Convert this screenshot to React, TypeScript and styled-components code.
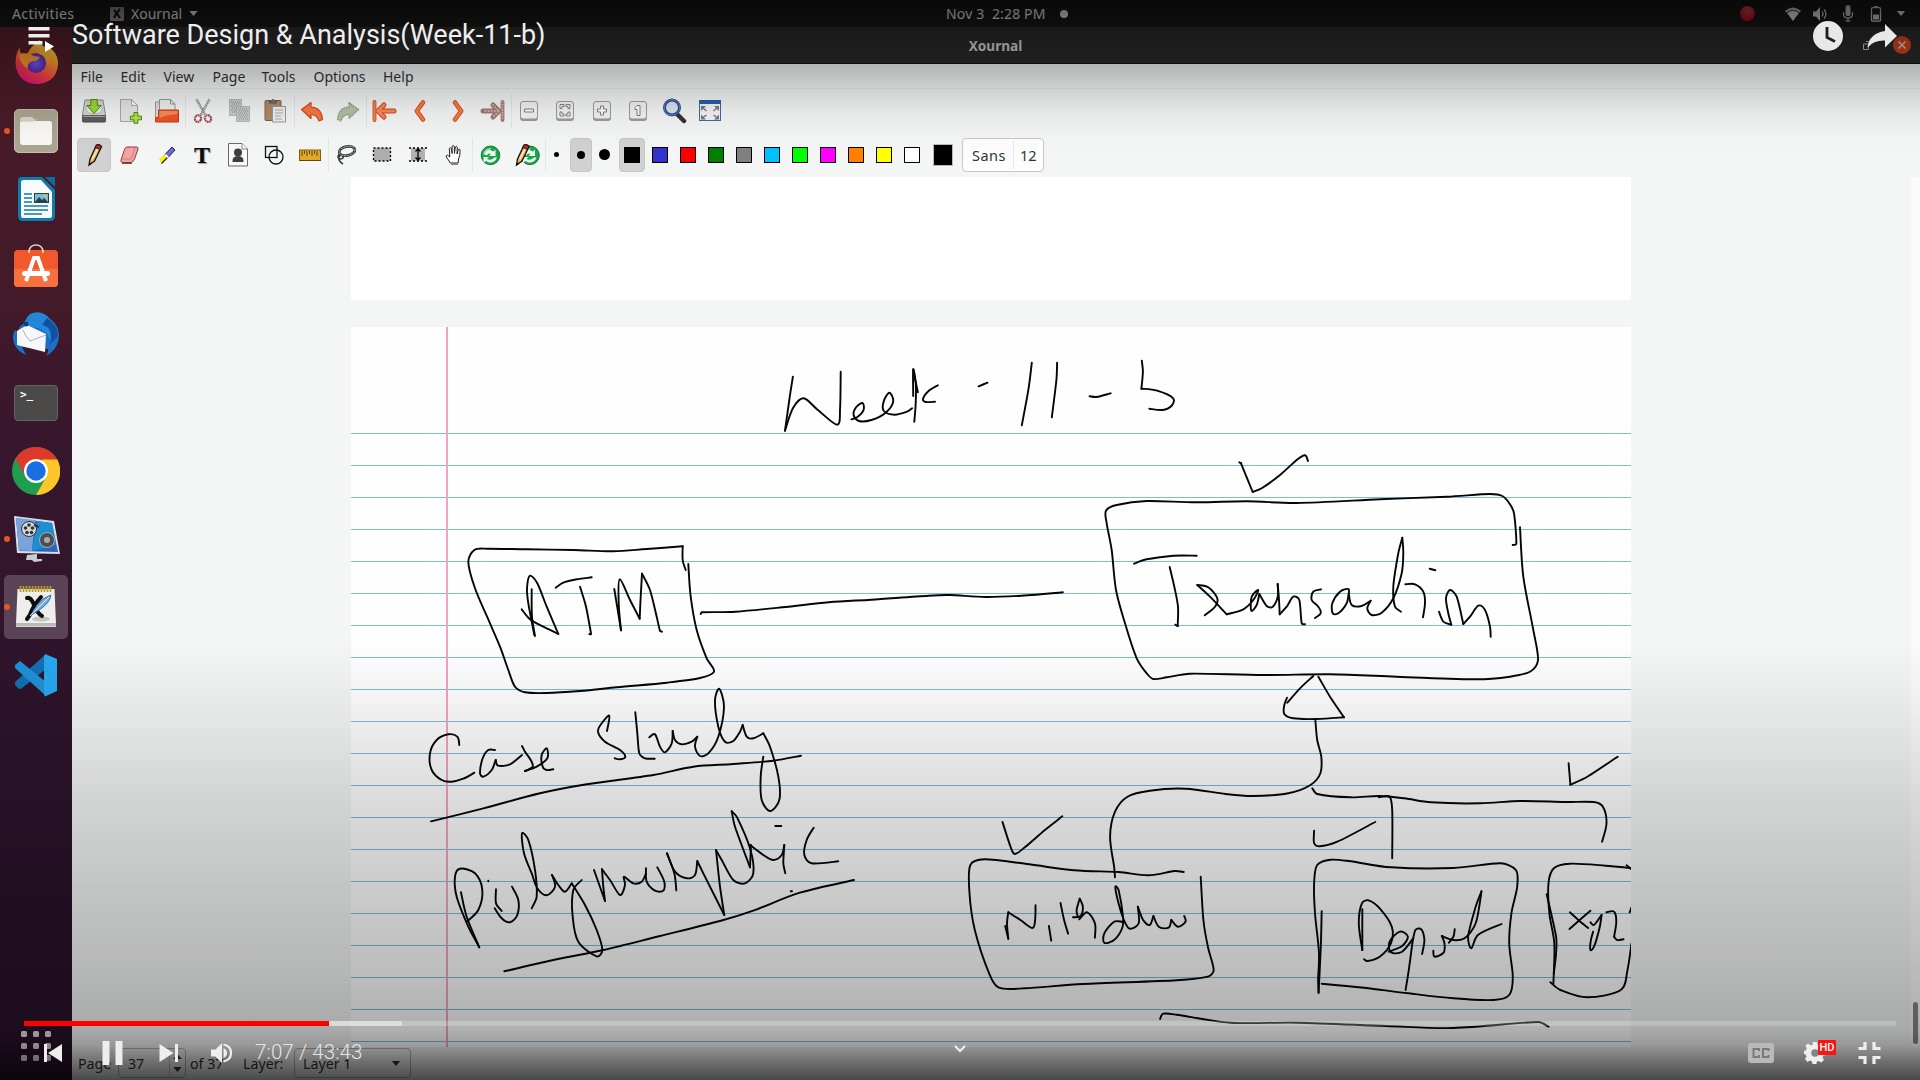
import React from 'react';
import styled, { createGlobalStyle } from 'styled-components';

const Global = createGlobalStyle`
  html, body { margin: 0; padding: 0; background: #000; }
  * { box-sizing: border-box; }
  svg { display: block; flex: none; }
`;

const UI_FONT = '"Noto Sans", "Open Sans", sans-serif';
const PLAYER_FONT = 'Roboto, "Liberation Sans", sans-serif';

/* ---------- desktop ---------- */

const Screen = styled.main`
  position: relative;
  width: 1920px;
  height: 1080px;
  overflow: hidden;
  display: grid;
  grid-template-rows: 27px 1fr;
  font-family: ${UI_FONT};
  font-size: 14px;
  color: #2e3436;
`;

const Panel = styled.header`
  background: #181817;
  color: #ededed;
  display: grid;
  grid-template-columns: 1fr 240px 1fr;
  align-items: center;
  font-size: 14px;
  line-height: 26px;
`;

const PanelLeft = styled.div`
  display: flex;
  align-items: center;
  padding-left: 12px;
  height: 26px;
`;

const Activities = styled.span`
  width: 98px;
  letter-spacing: 0.4px;
`;

const AppMenu = styled.div`
  display: flex;
  align-items: center;
  gap: 7px;
`;

const PanelClock = styled.div`
  display: flex;
  align-items: center;
  padding-left: 106px;
  white-space: pre;
  letter-spacing: 0.15px;
  gap: 14px;
  height: 26px;
`;

const Bullet = styled.span`
  width: 8px;
  height: 8px;
  border-radius: 50%;
  background: #ededed;
`;

const PanelRight = styled.div`
  display: flex;
  justify-content: flex-end;
  align-items: center;
  gap: 12px;
  height: 26px;
  padding-right: 14px;
`;

const Record = styled.span`
  width: 15px;
  height: 15px;
  margin-right: 18px;
  border-radius: 50%;
  background: radial-gradient(circle at 50% 20%, #cf4a4a, #c01028 70%);
`;

const Desktop = styled.div`
  display: grid;
  grid-template-columns: 72px 1fr;
  min-height: 0;
`;

const Dock = styled.nav`
  display: flex;
  flex-direction: column;
  padding: 2px 0 10px;
  background: linear-gradient(#571e2a 0, #471a28 100px, #421a29 280px, #38172d 400px, #2d132b 700px, #28112a 100%);
`;

const DockItem = styled.div<{ $running?: boolean; $active?: boolean }>`
  position: relative;
  height: 64px;
  margin: 2px 4px;
  border-radius: 5px;
  display: flex;
  align-items: center;
  justify-content: center;
  padding-bottom: 1px;
  background: ${(p) => (p.$active ? 'rgba(255,255,255,0.2)' : 'transparent')};
  &::before {
    content: '';
    display: ${(p) => (p.$running ? 'block' : 'none')};
    position: absolute;
    left: 0;
    top: 29px;
    width: 6px;
    height: 6px;
    border-radius: 50%;
    background: #e95420;
  }
`;

const AppGrid = styled.div`
  margin: auto auto 9px;
  display: grid;
  grid-template-columns: repeat(3, 6px);
  grid-auto-rows: 6px;
  gap: 6px;
  width: 30px;
`;

const AppGridDot = styled.i`
  border-radius: 1.5px;
  background: #e6e0e6;
`;

/* ---------- Xournal window ---------- */

const Window = styled.section`
  display: grid;
  grid-template-rows: 37px 25px 43px 45px 870px 33px;
  background: #f4f5f5;
  min-width: 0;
`;

const TitleBar = styled.div`
  display: grid;
  grid-template-columns: 1fr auto 1fr;
  align-items: center;
  background: #2b2b2b;
  border-bottom: 1px solid #161616;
  color: #dedede;
  font-weight: 700;
  font-size: 13.6px;
  padding-right: 9px;
`;

const WindowTitle = styled.span`
  margin-left: 8px;
`;

const WindowButtons = styled.div`
  display: flex;
  justify-content: flex-end;
  align-items: center;
  gap: 22px;
`;

const CloseButton = styled.span`
  width: 18px;
  height: 18px;
  border-radius: 50%;
  background: #e2481f;
  display: flex;
  align-items: center;
  justify-content: center;
`;

const MenuBar = styled.div`
  display: flex;
  align-items: center;
  padding-left: 8.5px;
  border-bottom: 1px solid #e9e9e8;
`;

const MenuItem = styled.span<{ $w: number }>`
  width: ${(p) => p.$w}px;
  line-height: 20px;
  padding-top: 1px;
`;

const Toolbar = styled.div`
  display: flex;
  align-items: center;
  padding-left: 4px;
`;

const Tool = styled.span<{ $w?: number; $sep?: boolean }>`
  width: ${(p) => p.$w ?? 36.25}px;
  height: 34px;
  display: flex;
  align-items: center;
  justify-content: center;
  box-shadow: ${(p) => (p.$sep ? '1px 0 0 #e6e8e8' : 'none')};
`;

const ToolFace = styled.span<{ $on?: boolean; $w: number }>`
  width: ${(p) => p.$w}px;
  height: 34px;
  border-radius: 4px;
  display: flex;
  flex: none;
  align-items: center;
  justify-content: center;
  background: ${(p) => (p.$on ? '#d2d1d1' : 'transparent')};
  border: 1px solid ${(p) => (p.$on ? '#c8c7c6' : 'transparent')};
`;

const Thickness = styled.i<{ $d: number }>`
  width: ${(p) => p.$d}px;
  height: ${(p) => p.$d}px;
  border-radius: 50%;
  background: #000;
`;

const Swatch = styled.i<{ $c: string }>`
  width: 16px;
  height: 16px;
  background: ${(p) => p.$c};
  border: 1.5px solid #000;
`;

const ColorButton = styled.i`
  width: 20px;
  height: 22px;
  margin: 0 9px 0 7px;
  background: #000;
  border: 1px solid #b9b9b9;
`;

const FontButton = styled.div`
  display: flex;
  align-items: center;
  height: 34px;
  width: 82px;
  background: #fdfdfd;
  border: 1px solid #c9c8c6;
  border-radius: 4px;
  font-size: 14.5px;
`;

const FontName = styled.span`
  width: 51px;
  padding-left: 9px;
  line-height: 28px;
  letter-spacing: 0.5px;
  border-right: 1px solid #e8e8e7;
`;

const FontSize = styled.span`
  padding-left: 6px;
`;

const Viewport = styled.div`
  display: grid;
  grid-template-columns: 279px 1280px 280px 9px;
  overflow: hidden;
`;

const Pages = styled.div`
  grid-column: 2;
  display: flex;
  flex-direction: column;
  gap: 27px;
  overflow: hidden;
`;

const BlankSheet = styled.div`
  height: 123px;
  flex: none;
  background: #fff;
`;

const RuledSheet = styled.div`
  height: 720px;
  flex: none;
  background:
    linear-gradient(90deg, transparent 95.2px, #f0a3c8 95.2px, #f0a3c8 96.8px, transparent 96.8px),
    repeating-linear-gradient(transparent 0, transparent 30.7px, #7cbcdc 31px, #7cbcdc 31.8px, transparent 32px) 0 75px no-repeat,
    #fefefe;
`;

const ScrollTrack = styled.div`
  grid-column: 4;
  background: #fbfbfb;
  display: flex;
  flex-direction: column;
  justify-content: flex-end;
  padding: 0 0 3px 2px;
`;

const ScrollThumb = styled.i`
  width: 5px;
  height: 42px;
  border-radius: 3px;
  background: #868686;
`;

const StatusBar = styled.div`
  display: flex;
  align-items: center;
  padding: 0 0 1px 6px;
  font-size: 14.2px;
  color: #2e3436;
`;

const Field = styled.div<{ $w: number; $pl: number }>`
  display: flex;
  align-items: center;
  justify-content: space-between;
  width: ${(p) => p.$w}px;
  height: 30px;
  padding-left: ${(p) => p.$pl}px;
  border: 1.5px solid #b5b3b0;
  border-radius: 4px;
`;

const Spinner = styled.span`
  display: grid;
  grid-template-rows: 13px 13px;
  place-items: center;
  width: 16px;
  border-left: 1px solid #c4c4c4;
`;

const StatusText = styled.span<{ $w: number; $pl?: number }>`
  width: ${(p) => p.$w}px;
  padding-left: ${(p) => p.$pl ?? 0}px;
`;

const ComboArrow = styled.span`
  margin-right: 9px;
`;

/* ---------- video player overlay ---------- */

const Shade = styled.div`
  position: absolute;
  inset: 0;
  background:
    linear-gradient(rgba(0,0,0,.62) 0, rgba(0,0,0,.42) 27px, rgba(0,0,0,.34) 45px, rgba(0,0,0,.27) 64px,
      rgba(0,0,0,.15) 89px, rgba(0,0,0,.06) 112px, rgba(0,0,0,.015) 135px, transparent 155px),
    linear-gradient(transparent 640px, rgba(0,0,0,.05) 705px, rgba(0,0,0,.14) 805px, rgba(0,0,0,.2) 890px,
      rgba(0,0,0,.255) 970px, rgba(0,0,0,.31) 1030px, rgba(0,0,0,.38) 1045px, rgba(0,0,0,.53) 1060px, rgba(0,0,0,.7) 1080px);
`;

const Player = styled.div`
  position: absolute;
  inset: 0;
  display: flex;
  flex-direction: column;
  justify-content: space-between;
  font-family: ${PLAYER_FONT};
  color: #eee;
`;

const PlayerTop = styled.div`
  display: flex;
  align-items: flex-start;
  padding: 17px 20px 0 28px;
`;

const QueueIcon = styled.svg`
  margin-top: 10px;
`;

const VideoTitle = styled.h1`
  flex: 1;
  margin: 0 0 0 16px;
  font-size: 27px;
  line-height: 36px;
  font-weight: 400;
  white-space: nowrap;
`;

const PlayerBottom = styled.div`
  height: 59px;
`;

const Progress = styled.div`
  height: 5px;
  margin: 0 24px;
  display: flex;
  background: rgba(255, 255, 255, 0.22);
`;

const Segment = styled.i<{ $w: number; $c: string }>`
  width: ${(p) => p.$w}px;
  background: ${(p) => p.$c};
`;

const Controls = styled.div`
  height: 54px;
  display: grid;
  grid-template-columns: 1fr auto 1fr;
  align-items: center;
`;

const ControlGroup = styled.div<{ $end?: boolean }>`
  display: flex;
  align-items: center;
  height: 54px;
  justify-content: ${(p) => (p.$end ? 'flex-end' : 'flex-start')};
  padding: ${(p) => (p.$end ? '0 39px 0 0' : '0 0 0 43px')};
`;

const Time = styled.span`
  margin: -2px 0 0 21px;
  font-size: 20.5px;
  font-weight: 300;
  letter-spacing: 0.1px;
  line-height: 24px;
  color: #e4e4e4;
`;

const CollapseIcon = styled.svg`
  margin-bottom: 8px;
`;

const CaptionBadge = styled.span`
  width: 26px;
  height: 20px;
  border-radius: 3px;
  background: #b9b9b9;
  display: flex;
  align-items: center;
  justify-content: center;
`;

const Settings = styled.span`
  position: relative;
  margin: 0 22px 0 30px;
  padding-right: 10px;
`;

const HdBadge = styled.span`
  position: absolute;
  left: 14px;
  top: -2px;
  width: 18px;
  height: 15px;
  background: #f11;
  border-radius: 1px;
  color: #fff;
  font-size: 11px;
  font-weight: 500;
  line-height: 15px;
  text-align: center;
`;

/* ---------- toolbar icons ---------- */

const Svg = ({ s = 26, children }: { s?: number; children: React.ReactNode }) => (
  <svg width={s} height={s} viewBox="0 0 26 26">{children}</svg>
);

const SaveIcon = () => (
  <Svg>
    <path d="M4 2h18l2.500 15v6q0 1-1 1h-21q-1 0-1-1v-6z" fill="#d4d4d2" stroke="#8a8a88" />
    <path d="M1.500 17.500h23V23q0 1-1 1h-21q-1 0-1-1z" fill="#5c5c5c" stroke="#444" strokeWidth=".6" />
    <path d="M2 18h22v1H2z" fill="#a5a5a5" />
    <ellipse cx="13" cy="11" rx="8" ry="5" fill="#ececec" stroke="#bbb" />
    <path d="M9.800 1.500h6.400v6h4L13 15.500 5.800 7.500h4z" fill="#9bd53a" stroke="#4e8a0a" />
  </Svg>
);
const NewIcon = () => (
  <Svg>
    <path d="M3.500 1.500h11l6 6v16h-17z" fill="#e4e4e4" stroke="#a8a8a8" />
    <path d="M14.500 1.500v6h6z" fill="#fafafa" stroke="#a8a8a8" />
    <path d="M17 14.500h3.800v3.600h3.700v3.700h-3.700v3.500H17v-3.500h-3.600v-3.700H17z" fill="#b4e04a" stroke="#4e8a0a" />
  </Svg>
);
const OpenIcon = () => (
  <Svg>
    <path d="M1.500 4h7l2 3v15h-9z" fill="#ddd" stroke="#999" />
    <path d="M5.500 1.500h11l4.500 4.500v12h-15.500z" fill="#f0f0f0" stroke="#999" />
    <path d="M16.500 1.500V6H21" fill="none" stroke="#999" />
    <path d="M4.500 12h20v12h-23v-4.500h3z" fill="#ee5427" stroke="#cf3b10" />
    <path d="M5.500 13h18v3q-12 1-18 4z" fill="#f58a5e" />
  </Svg>
);
const CutIcon = () => (
  <Svg>
    <path d="M6.500 1.500l8.500 15M19.500 1.500L11 16.500" stroke="#8d8d8d" strokeWidth="2.600" fill="none" strokeDasharray="1.300 .7" />
    <g fill="none" stroke="#a04a57" strokeWidth="2.200" strokeDasharray="1.600 .5">
      <ellipse cx="8" cy="20.500" rx="3" ry="3.500" transform="rotate(30 8 20.500)" />
      <ellipse cx="18" cy="20.500" rx="3" ry="3.500" transform="rotate(-30 18 20.500)" />
    </g>
  </Svg>
);
const CopyIcon = () => (
  <Svg>
    <g fill="#c9cbcb" stroke="#8d9090" strokeDasharray="1 1">
      <path d="M3.500 1.500h12v16h-12z" /><path d="M10.500 8.500h13v15h-13z" />
      <path d="M12 11h10M13 13h9M12 15h10M13 17h9M12 19h10M13 21h9M5 4h9M6 6h8M5 8h5M6 10h4M5 12h5M6 14h4" />
    </g>
  </Svg>
);
const PasteIcon = () => (
  <Svg>
    <rect x="3" y="2.500" width="16" height="20" rx="1" fill="#b08a61" stroke="#81603d" />
    <path d="M7.500 5V2.500h2q1.500-2 3 0h2V5z" fill="#777" stroke="#555" />
    <path d="M10.500 8.500h13v15.500h-13z" fill="#eee" stroke="#999" />
    <path d="M13 12h8M13 15h8M13 18h6M13 21h7" stroke="#aaa" />
  </Svg>
);
const UndoIcon = ({ flip }: { flip?: boolean }) => (
  <Svg>
    <g transform={flip ? 'matrix(-1 0 0 1 26 0)' : undefined}>
      <path d="M2.500 11.500L12 4.500V9q10.500.5 11.500 12.500L20 23q-2-6.500-8-6.500v4z"
        fill={flip ? '#b3c0a4' : '#f57840'} stroke={flip ? '#7c8e70' : '#d5471a'} strokeLinejoin="round" strokeWidth="1.200"
        strokeDasharray={flip ? '1.200 .8' : undefined} />
    </g>
  </Svg>
);
const EndIcon = ({ flip }: { flip?: boolean }) => (
  <Svg>
    <g transform={flip ? 'matrix(-1 0 0 1 26 0)' : undefined} fill="none" strokeLinecap="round">
      <path d="M3.500 4v18" stroke={flip ? '#a07a72' : '#d5471a'} strokeWidth="3.800" />
      <path d="M13 7l-6 6 6 6M8 13h15" stroke={flip ? '#a07a72' : '#d5471a'} strokeWidth="5" />
      <path d="M3.500 4v18" stroke={flip ? '#cdb3ad' : '#f8875a'} strokeWidth="2" strokeDasharray={flip ? '.1 2.600' : undefined} />
      <path d="M13 7l-6 6 6 6M8 13h15" stroke={flip ? '#cdb3ad' : '#f8875a'} strokeWidth={flip ? 2 : 3} strokeDasharray={flip ? '.1 3' : undefined} />
    </g>
  </Svg>
);
const ChevronIcon = ({ flip }: { flip?: boolean }) => (
  <Svg>
    <g transform={flip ? 'matrix(-1 0 0 1 27 0)' : undefined} fill="none" strokeLinecap="round" strokeLinejoin="round">
      <path d="M16 4.500L9.800 13l6.200 8.500" stroke="#d5471a" strokeWidth="4.600" />
      <path d="M16 4.500L9.800 13l6.200 8.500" stroke="#f67a45" strokeWidth="2.800" />
    </g>
  </Svg>
);
const ZoomBox = ({ d }: { d: string }) => (
  <Svg>
    <rect x="4" y="4" width="18" height="19" rx="3" fill="#9a9a9a" />
    <rect x="4.500" y="3.500" width="17" height="17.500" rx="2.500" fill="#f2f2f2" stroke="#9b9b9b" />
    <path d={d} fill="#fff" stroke="#808080" strokeWidth="1" />
  </Svg>
);
const FindIcon = () => (
  <Svg>
    <path d="M16 16l7 7" stroke="#333" strokeWidth="4.500" strokeLinecap="round" />
    <circle cx="11" cy="9.500" r="7.500" fill="#d7e2ee" stroke="#2b4687" strokeWidth="3" />
    <circle cx="11" cy="9.500" r="7.700" fill="none" stroke="#6884c0" strokeWidth="1" />
  </Svg>
);
const FullscreenIcon = () => (
  <Svg>
    <rect x="2.500" y="2.500" width="21" height="20" fill="#f4f4f4" stroke="#3d68ae" />
    <path d="M2 2h22v4H2z" fill="#2d5bab" />
    <path d="M4 8h5l-5 5zM22 8v5l-5-5zM4 21.500v-5l5 5zM22 21.500h-5l5-5z" fill="#7a7a7a" />
    <path d="M6 10l3.500 3M20 10l-3.500 3M6 19.500L9.500 17M20 19.500L16.500 17" stroke="#7a7a7a" strokeWidth="1.500" />
  </Svg>
);

const PencilShape = () => (
  <>
    <path d="M8 23l1-6L15.500 3q3-1 5 1.500L13.500 19z" fill="#f0b668" stroke="#111" strokeWidth="1.300" />
    <path d="M15.500 3q3-1 5 1.500l-1.700 3-4.800-2z" fill="#b42a2a" stroke="#111" strokeWidth=".8" />
    <path d="M11.300 17l5.200-10" stroke="#fff2d0" strokeWidth="1.300" />
    <path d="M8 23.500l.5-3 2 1.300z" fill="#000" />
  </>
);
const PencilIcon = () => <Svg><PencilShape /></Svg>;
const EraserIcon = () => (
  <Svg>
    <path d="M10 5h9.500q2 0 1.500 2l-3.500 10q-1 3-3.500 3.500H5.500q-2 0-1.500-2.500l3.500-10.500Q8.500 5 10 5z" fill="#f2a3a3" stroke="#8f3a3a" />
    <path d="M4.500 17h9.500l4-11" fill="none" stroke="#d97575" />
    <path d="M5 21.300h10" stroke="#333" />
  </Svg>
);
const HighlighterIcon = () => (
  <Svg>
    <path d="M12.500 12l6.500-7 3 3-6.500 7z" fill="#6b6bea" stroke="#223" strokeWidth="1" />
    <path d="M11 13.500l2-2 3 3-2 2z" fill="#fff" stroke="#333" strokeWidth=".6" />
    <path d="M5.500 17.500l5.500-4.500 3 3-5 5.500z" fill="#f4f01c" />
    <path d="M8.500 21.500l5.500-5.500" stroke="#222" strokeWidth="1.200" />
  </Svg>
);
const TextToolMark = styled.b`
  font-family: "Liberation Serif", serif;
  font-size: 24px;
  line-height: 26px;
  color: #0b0b0b;
  text-shadow: 1px 1px 1px #9a9a9a;
`;
const ImageIcon = () => (
  <Svg>
    <path d="M3.500 1.500h13.500l5.500 5.500v17h-19z" fill="#f8f8f8" stroke="#6a6a6a" strokeLinejoin="round" />
    <path d="M17 1.500V7h5.500" fill="#fff" stroke="#888" />
    <circle cx="13" cy="10.500" r="4" fill="#3e3e3e" />
    <path d="M7.500 20q-.5-6 5.500-6t5.500 6z" fill="#3e3e3e" />
  </Svg>
);
const ShapesIcon = () => (
  <Svg>
    <rect x="4.500" y="4.500" width="11.500" height="11" fill="none" stroke="#111" strokeWidth="1.300" />
    <circle cx="15" cy="15" r="7" fill="none" stroke="#111" strokeWidth="1.300" />
  </Svg>
);
const RulerIcon = () => (
  <Svg>
    <rect x="2.500" y="8" width="21" height="10.500" fill="#e0a927" stroke="#82600c" />
    <path d="M3 18.500h21" stroke="#5e4508" />
    <path d="M5 9v5M7.500 9v3M10 9v5M12.500 9v3M15 9v5M17.500 9v3M20 9v5" stroke="#5e4508" />
  </Svg>
);
const LassoIcon = () => (
  <Svg>
    <g fill="none" stroke="#3a3a3a">
      <ellipse cx="14" cy="9" rx="8" ry="4.500" transform="rotate(-12 14 9)" strokeWidth="2.800" />
      <path d="M7 12q-4 3 0 5 4 0 3-3-2-3-4 1-1 4 4 7" strokeWidth="1.700" />
    </g>
    <ellipse cx="14" cy="9" rx="8" ry="4.500" transform="rotate(-12 14 9)" fill="none" stroke="#cfcfcf" strokeWidth=".8" strokeDasharray="2 1" />
  </Svg>
);
const SelectIcon = () => (
  <Svg>
    <rect x="4.500" y="6" width="17" height="13" fill="#adadad" stroke="#000" strokeWidth="1.300" strokeDasharray="2 2" />
  </Svg>
);
const VSpaceIcon = () => (
  <Svg>
    <path d="M6 6h14v13H6z" fill="#b2b2b2" />
    <path d="M4 6h18M4 19h18" stroke="#000" strokeWidth="1.300" strokeDasharray="2 2" />
    <path d="M13 7v11M10.500 9.500L13 7l2.500 2.500M10.500 15.500L13 18l2.500-2.500" fill="none" stroke="#000" strokeWidth="1.300" />
  </Svg>
);
const HandIcon = () => (
  <Svg>
    <path d="M8.500 21Q6.500 17.500 4.500 15q-.5-2 1.300-1.800L8 15 7.500 6.500q1-1.800 2 0l.8 5V4.300q1-1.500 2.200 0l.2 7 .8-6.300q1.200-1.500 2 0l-.3 7 1.300-4.500q1.400-1 1.800.5 0 6-1.500 9l-.5 4z" transform="translate(.8 0)" fill="#fff" stroke="#222" strokeLinejoin="round" />
    <path d="M10 22.200h7" stroke="#555" />
  </Svg>
);
const RefreshShape = () => (
  <>
    <circle cx="13.500" cy="13.300" r="9.300" fill="#19a54a" stroke="#0c7d33" />
    <path d="M6 12.500q1.500-7 8-6.500l-1 2.500q-4 .5-4.500 4.500z" fill="#8fe0a8" />
    <path d="M8 12.500q.5-4.500 5-4.500l3.500 1.500 2-2V14H12l2-2q-3-1.500-4 1.500z" fill="#ecfff2" />
    <path d="M6.500 15H12l-2 2q4 2 7.500-1.500h2.500q-2 5.500-8 5l-3-1.500-2.500 1.500z" fill="#ecfff2" />
  </>
);
const RefreshIcon = () => <Svg><RefreshShape /></Svg>;
const DefaultPenIcon = () => (
  <Svg>
    <g transform="translate(2.500 0)"><RefreshShape /></g>
    <g transform="translate(-5.500 0)"><PencilShape /></g>
  </Svg>
);

/* ---------- dock icons ---------- */

const Dk = ({ s = 48, children }: { s?: number; children: React.ReactNode }) => (
  <svg width={s} height={s} viewBox="0 0 48 48">{children}</svg>
);

const Firefox = () => (
  <Dk>
    <defs>
      <linearGradient id="ffBody" x1=".8" y1="0" x2=".3" y2="1">
        <stop offset="0" stopColor="#fff14a" /><stop offset=".35" stopColor="#ffa02e" />
        <stop offset=".7" stopColor="#ff3f46" /><stop offset="1" stopColor="#e3127f" />
      </linearGradient>
      <radialGradient id="ffGlobe"><stop offset="0" stopColor="#7a5cff" /><stop offset="1" stopColor="#5a2bb0" /></radialGradient>
    </defs>
    <path d="M8 8q-1 4 1 6l6 1q4-8 13-14 0 5 5 7l1-2q13 8 12 20-2 17-19 19-18 1-23-16Q2 17 8 8z" fill="url(#ffBody)" />
    <circle cx="24" cy="24" r="10" fill="url(#ffGlobe)" />
    <path d="M7 16q8-4 15 1l6 1q-2 4-7 4-7 2-5 8-8-5-9-14z" fill="#ff9a2c" />
    <path d="M26 15q10 0 10 10 3-9-4-13z" fill="#ffb52e" />
  </Dk>
);
const Files = () => (
  <Dk>
    <rect x="2" y="2" width="44" height="44" rx="5" fill="#aba492" />
    <rect x="2.500" y="2.500" width="43" height="43" rx="5" fill="none" stroke="#c6bfae" />
    <path d="M8 13q0-3 3-3h9l4 4h13q3 0 3 3v5H8z" fill="#dad5cb" />
    <rect x="8" y="14" width="32" height="24" rx="3" fill="#faf8f4" />
    <path d="M8 14h14l3-2" fill="none" stroke="#cfcabf" />
  </Dk>
);
const Writer = () => (
  <Dk>
    <path d="M9 2h21L43 15v26q0 5-5 5H11q-5 0-5-5V6q0-4 3-4z" fill="#0e7bab" />
    <path d="M33 2h10v10z" fill="#0b6f9d" />
    <path d="M12 5h17l11 12v24q0 2-2 2H11q-2 0-2-2V7q0-2 3-2z" fill="#f7fbfd" />
    <path d="M12 19h8M12 23h8M12 27h8M12 31h24M12 35h24M12 39h18" stroke="#1678a5" strokeWidth="1.700" />
    <rect x="22.500" y="18.500" width="14" height="9" fill="#79b9da" stroke="#25424f" />
    <path d="M23 27l4-5 3 3 2-2 4 4z" fill="#25424f" /><circle cx="33" cy="21" r="1.500" fill="#f3bc31" />
  </Dk>
);
const Software = () => (
  <Dk>
    <rect x="2" y="7" width="44" height="37" rx="4" fill="#f0592b" />
    <path d="M2 26h44v14q0 4-4 4H6q-4 0-4-4z" fill="#f7713f" />
    <path d="M17 10V8q1-6 7-6t7 6v2" fill="none" stroke="#e8d3c0" strokeWidth="1.700" />
    <path d="M14 38l8-23h4l8 23" fill="none" stroke="#fff" strokeWidth="4" />
    <rect x="10" y="28" width="28" height="5" rx="2.500" fill="#fff" />
  </Dk>
);
const Thunderbird = () => (
  <Dk>
    <path d="M11 13Q17 1 30 5q15 3 17 18 0 15-13 22 3-5 2-7l-26-2 4 8Q1 38 1 26q0-4 2-7 2 1 3 3 0-6 5-9z" fill="#1c6fc4" />
    <path d="M18 3q12-5 20 5 8 12 2 26-4-14-14-17-10-1-14 2 0-11 6-16z" fill="#2387d8" />
    <path d="M5 20l10-6 19 9-1 18-28-7z" fill="#f6f8fa" />
    <path d="M11 19q2 6 7 11l16-6" fill="none" stroke="#a8b1bb" />
    <path d="M30 14q12 2 8 20l8-9q-1-12-11-18z" fill="#1251a0" />
    <circle cx="14" cy="13" r="2.500" fill="#123e78" />
  </Dk>
);
const PromptBox = styled.div`
  width: 44px;
  height: 36px;
  border-radius: 4px;
  background: #4b4a48;
  border: 1px solid #656462;
  color: #fff;
  font: 700 11px/14px "DejaVu Sans Mono", monospace;
  padding: 2px 0 0 5px;
`;
const Chrome = () => (
  <Dk>
    <circle cx="24" cy="24" r="24" fill="#1f9d50" />
    <path d="M24 0a24 24 0 0 1 21.500 13.300H24L13.600 30 3.500 11.500A24 24 0 0 1 24 0z" fill="#de3a2c" />
    <path d="M45.300 12.500A24 24 0 0 1 24 48l10-17.500L30 12.500z" fill="#fcc626" />
    <circle cx="24" cy="24" r="12" fill="#fff" /><circle cx="24" cy="24" r="9.700" fill="#1a6fe0" />
  </Dk>
);
const Recorder = () => (
  <Dk>
    <path d="M15 40l10-1v5h5v2l-8 1-2-2h-6z" fill="#c9cdcf" />
    <path d="M2 1l40 5 6 33-43-1z" fill="#d9dfe6" />
    <path d="M4 3l36 5 6 29-39-1z" fill="#2b66b8" />
    <path d="M23 5l-3 31-13-.5L4 3z" fill="#7ba3db" /><path d="M25 6l15 2 4 22-24 6z" fill="#1d8fd0" />
    <circle cx="17" cy="14" r="7.500" fill="#d5d8dc" stroke="#333" />
    <g fill="#333"><circle cx="17" cy="10" r="1.800" /><circle cx="13.500" cy="13" r="1.800" /><circle cx="20.500" cy="13" r="1.800" /><circle cx="15" cy="17.500" r="1.800" /><circle cx="19.500" cy="17.500" r="1.800" /></g>
    <path d="M22 10l5 2" stroke="#333" strokeWidth="2" />
    <circle cx="35" cy="25" r="7.500" fill="#4b4f55" stroke="#aab" /><circle cx="35" cy="25" r="3" fill="#aaa" />
  </Dk>
);
const Xournal = () => (
  <Dk>
    <path d="M5.500 6h37l1.500 35v3H4v-3z" fill="#eeeeec" />
    <path d="M4 40h40v3.500H4z" fill="#b9b9b7" />
    <path d="M8.500 3v6M11.500 3v6M14.500 3v6M17.500 3v6M20.500 3v6M23.500 3v6M26.500 3v6M29.500 3v6M32.500 3v6M35.500 3v6M38.500 3v6" stroke="#b99b1f" strokeWidth="1.700" />
    <ellipse cx="29" cy="36" rx="9" ry="2.500" fill="#c4c4c2" />
    <path d="M15 15q4-1 7 7t8 11M29 14q-7 8-9 13-2 6-5 9" fill="none" stroke="#0c0c0c" strokeWidth="4" strokeLinecap="round" />
    <path d="M18 33l7-11q5-7 14-10-1 7-9 13z" fill="#7aadd8" stroke="#3a6ea8" />
    <path d="M18 33l19-19" stroke="#d7e8f7" />
  </Dk>
);
const VsCode = () => (
  <Dk>
    <path d="M34 3L3 31v3l4 4q2 0 3-1L34 18z" fill="#1270b3" />
    <path d="M3 14l5-4 26 21v14L3 17z" fill="#2190d6" />
    <path d="M33 3l12 5v32l-12 5.500q-1-1-1-3V6z" fill="#27a8f0" />
  </Dk>
);

/* ---------- handwriting ---------- */

type InkGroup = { x: number; y: number; sx: number; sy: number; strokes: string[] };

const INK: InkGroup[] = [
  {
    x: 700, y: 330, sx: 2.8, sy: 3,
    strokes: [
      '260,140 250,210 238,302', '238,302 260,235 290,205 330,240 384,284 392,240 394,125',
      '424,268 440,262 458,240 455,219 437,232 430,255 445,273 480,270 520,248 541,215 530,188 514,215 515,243 545,254 580,245 594,235',
      '597,198 597,118 604,160 604,220 600,275', '610,187 597,120', '666,166 640,183 624,208 632,216 658,215',
      '780,169 805,158', '929,98 920,175 901,286', '1000,98 998,150 985,262', '1091,199 1110,201 1150,190',
      '1237,92 1240,125 1236,176', '1236,176 1280,182 1325,205 1320,228 1295,240 1258,236',
      '1016,787 900,797 800,801 700,795 640,797 480,809 360,817 230,832 100,845 5,847 2,852',
    ],
  },
  {
    x: 400, y: 520, sx: 3, sy: 3,
    strokes: [
      '857,150 848,120 848,79',
      '848,79 740,87 640,94 520,90 380,88 260,86 223,90 205,125 225,205 270,310 300,380 325,450 345,500 375,517 440,519 540,513 650,502 800,488 900,474 942,455 920,415 890,330 872,230 865,132',
      '405,348 396,290 395,208', '403,345 385,250 381,205 390,167 412,190 440,260 475,342', '475,342 430,320 390,298 365,268',
      '467,203 490,188 530,178 575,172', '540,200 558,260 573,340', '573,343 568,342',
      '643,207 663,331', '663,331 656,250 659,178 690,240 719,296', '719,296 722,230 726,161', '726,161 750,210 770,290 780,332 786,335',
      '178,675 172,650 145,643 110,660 90,700 95,750 125,780 155,785 190,776 223,758',
      '285,690 265,690 248,715 240,760 250,770 275,750 287,720', '287,720 294,737 330,733 366,705', '366,678 375,695 392,720 398,740 375,753',
      '375,753 410,740 442,715 440,685 425,705 428,740 440,750 460,748',
      '621,633 628,587 605,610 594,635 615,665 660,690 676,710 660,718 644,715', '706,577 712,640 718,700 735,715 764,716',
      '748,652 765,643 780,680 795,697 815,670 818,633', '818,633 825,660 845,673 875,665 892,650',
      '892,650 885,680 900,708 925,700 955,650 972,560 958,506 945,540 955,620 975,665 1000,663 1020,635 1028,615',
      '1028,615 1040,650 1060,655 1090,640', '1090,640 1110,680 1135,770 1138,840 1110,873 1085,840 1082,770 1090,710',
      '93,904 250,865 420,820 560,793 760,765 880,740 1000,732 1120,722 1203,707',
      '183,1117 200,1190 238,1282', '238,1282 205,1220 170,1130 165,1070 180,1046 225,1060 247,1110 235,1170 200,1205',
      '265,1082 265,1084', '305,1173 288,1150 288,1108', '284,1165 305,1195 330,1207 352,1185 355,1140 336,1100',
      '395,1165 410,1130 405,1050 385,960 366,940 372,1000 395,1060 412,1105 440,1126 465,1100 456,1065', '456,1065 475,1095 495,1115 515,1090',
      '545,1080 520,1110 518,1190 535,1265 590,1309 607,1290 590,1230 555,1155 515,1090',
      '582,1050 615,1143', '615,1143 610,1100 606,1048', '606,1048 630,1080 660,1125 675,1095 672,1070 700,1090 725,1085 738,1060',
      '738,1045 740,1085 765,1112 790,1112 793,1085 772,1042', '801,1000 823,1060 829,1111', '801,1000 825,1055 860,1075 885,1065 892,1023',
      '892,1023 910,1060 973,1185', '973,1185 960,1100 948,990', '948,990 965,1020 1000,1080 1035,1090 1060,1060 1050,985 1010,890 995,874',
      '995,874 1005,920 1050,1042', '1050,1042 1053,975', '1050,975 1090,1005 1120,1020 1145,1005 1153,975', '1153,975 1150,1030 1156,1060',
      '1126,918 1144,918', '1241,923 1220,960 1213,1005 1235,1030 1315,1024', '1172,1114 1176,1114',
      '313,1354 470,1318 610,1290 780,1248 960,1203 1060,1172 1200,1118 1362,1080',
    ],
  },
  {
    x: 1080, y: 440, sx: 3, sy: 3,
    strokes: [
      '478,67 484,70', '483,70 518,156', '518,156 545,145 600,105 650,60 675,46 684,63',
      '1298,315 1309,311 1302,220 1290,193 1267,168 1230,162 1100,170 900,178 650,189 500,184 350,187 200,183 110,195 78,212 80,250 95,330 108,450 135,550 170,655 200,700 220,717 260,712 330,701 550,705 750,703 950,710 1190,718 1290,710 1350,695 1374,660 1360,570 1330,410 1320,262',
      '162,371 200,358 280,347 350,347', '269,381 283,440 294,500 293,558', '293,558 286,554',
      '374,526 405,500 412,475 385,442 352,435', '352,435 390,470 440,523', '440,523 490,508 520,480 535,450 515,470 514,512 530,495 538,462', '538,462 560,498 578,500 593,470 593,432',
      '593,432 597,480 599,523', '599,523 620,500 640,470 658,480 665,550 675,553',
      '723,448 700,455 695,480 715,500 722,520 705,534',
      '806,465 805,447 780,455 757,490 758,520 775,520 800,490 806,460', '806,460 815,495 845,498 872,482',
      '872,482 862,505 875,525 905,518 940,475 965,400 970,340 967,293', '967,293 955,340 940,440 945,500 963,515',
      '976,433 1005,433 1030,455 1035,490 1029,532', '1049,386 1066,391',
      '1077,515 1090,545 1114,554', '1114,554 1105,520 1098,475 1110,450 1130,470 1150,552', '1150,552 1170,530 1195,497 1215,510 1230,560 1232,590',
      '700,708 660,745 622,788', '621,773 613,795 613,822 640,835 710,837 792,832', '792,832 750,770 715,710',
    ],
  },
  {
    x: 940, y: 660, sx: 2.24, sy: 3,
    strokes: [
      '841,182 845,240 854,290 852,340 830,375 780,400 700,408 640,402 550,386 470,392 420,410 392,455 381,530 390,620 392,652',
      '834,385 845,402 920,412 985,408 1040,415 1100,427 1210,430 1300,423 1400,426 1465,426 1485,440 1493,490 1483,545',
      '983,412 1007,410 1013,450 1013,595',
      '140,486 158,560 168,582 190,562 235,510 274,469', '838,512 838,550 850,559 890,545 975,486', '1408,310 1412,374', '1412,374 1450,350 1518,290',
      '546,636 525,633 467,646 400,636 300,631 200,613 100,598 68,615 66,700 78,810 110,940 132,983 190,985 320,972 530,961 600,950 613,930 600,860 590,780 584,650',
      '146,798 153,836', '153,836 150,790 153,757', '153,757 180,780 207,804 213,780 214,736', '244,798 249,842', '270,729 278,780 287,821',
      '298,772 315,768 320,740 313,716', '313,716 306,750 308,768', '312,778 330,757 347,790 347,833',
      '408,785 390,785 368,820 368,848 390,840 408,805 410,770 400,690 393,680 398,720 412,780 425,806 445,790 443,740',
      '443,740 455,780 470,795 478,768', '478,768 490,800 512,803 518,780', '518,780 533,800 550,785 547,768',
      '855,754 853,860 848,998', '848,998 847,960 849,880 840,760 838,670 845,615 875,599 920,604 1010,622 1150,624 1255,610 1290,630 1293,680 1280,760 1275,850 1283,950 1275,1005 1240,1020 1150,1015 1050,1000 950,983 855,971',
      '946,870 946,748', '946,870 938,790 945,730 960,721 985,745 1012,800 1010,850 985,890 957,903 950,898',
      '1005,875 1035,858 1048,830 1030,815 1007,845 1010,877 1035,875 1060,835', '1043,990 1050,930 1058,850', '1058,850 1065,810 1078,808 1085,840 1080,882',
      '1105,872 1108,890 1128,878 1130,850 1124,828', '1124,828 1150,840 1175,835 1200,790 1213,694', '1213,694 1200,740 1183,830 1190,865 1205,825 1258,792', '1153,808 1150,830 1140,848',
      '1548,624 1490,617 1410,611 1375,625 1363,670 1365,760 1376,850 1374,972', '1538,616 1548,627', '1359,703 1380,830 1380,880 1375,940', '1367,967 1390,990 1450,1012 1525,990 1540,930 1549,850',
      '1411,757 1430,780 1452,804', '1457,752 1410,807', '1457,787 1465,795 1482,765', '1482,765 1478,800 1465,860 1457,870 1458,840 1463,815',
      '1493,757 1510,755 1515,785 1510,830', '1510,830 1517,840 1531,838', '1549,742 1545,757',
      '493,1077 500,1061 530,1064 650,1088 800,1088 1000,1098 1150,1104 1340,1086 1363,1100',
    ],
  },
];

/* Catmull-Rom spline through the sampled pen points. */
const spline = (stroke: string, g: InkGroup) => {
  const p = stroke.split(' ').map((s) => {
    const [a, b] = s.split(',').map(Number);
    return [g.x + a / g.sx, g.y + b / g.sy];
  });
  const f = (n: number) => n.toFixed(1);
  let d = `M${f(p[0][0])} ${f(p[0][1])}`;
  for (let i = 0; i < p.length - 1; i++) {
    const a = p[i - 1] ?? p[i];
    const b = p[i];
    const c = p[i + 1];
    const e = p[i + 2] ?? c;
    const len = Math.hypot(c[0] - b[0], c[1] - b[1]);
    const t1 = Math.min(1 / 6, (len / 3) / (Math.hypot(c[0] - a[0], c[1] - a[1]) || 1));
    const t2 = Math.min(1 / 6, (len / 3) / (Math.hypot(e[0] - b[0], e[1] - b[1]) || 1));
    d += `C${f(b[0] + (c[0] - a[0]) * t1)} ${f(b[1] + (c[1] - a[1]) * t1)} ${f(c[0] - (e[0] - b[0]) * t2)} ${f(c[1] - (e[1] - b[1]) * t2)} ${f(c[0])} ${f(c[1])}`;
  }
  return d;
};

const Handwriting = () => (
  <svg width="1280" height="720" viewBox="351 327 1280 720">
    <g fill="none" stroke="#050505" strokeWidth="1.9" strokeLinecap="round" strokeLinejoin="round">
      {INK.flatMap((g, i) => g.strokes.map((s, j) => <path key={`${i}-${j}`} d={spline(s, g)} />))}
    </g>
  </svg>
);

/* ---------- page ---------- */

const MENUS: [string, number][] = [['File', 40], ['Edit', 43], ['View', 49], ['Page', 49], ['Tools', 52], ['Options', 69.5], ['Help', 40]];

const ACTIONS: [React.ReactNode, boolean?][] = [
  [<SaveIcon />], [<NewIcon />], [<OpenIcon />, true], [<CutIcon />], [<CopyIcon />], [<PasteIcon />, true],
  [<UndoIcon />], [<UndoIcon flip />, true], [<EndIcon />], [<ChevronIcon />], [<ChevronIcon flip />], [<EndIcon flip />, true],
  [<ZoomBox d="M8.500 11h9v3h-9z" />],
  [<ZoomBox d="M8 6.500h4v2h-2v2H8zM18 6.500h-4v2h2v2h2zM8 18v-4h2v2h2v2zM18 18v-4h-2v2h-2v2z" />],
  [<ZoomBox d="M11.500 8h3v3h3v3h-3v3h-3v-3h-3v-3h3z" />],
  [<ZoomBox d="M12 7.500h3v10h-3v-6h-2v-2z" />],
  [<FindIcon />], [<FullscreenIcon />],
];

const TOOLS = [
  <EraserIcon />, <HighlighterIcon />, <TextToolMark>T</TextToolMark>, <ImageIcon />, <ShapesIcon />, <RulerIcon />,
  <LassoIcon />, <SelectIcon />, <VSpaceIcon />, <HandIcon />, <RefreshIcon />, <DefaultPenIcon />,
];

const COLORS = ['#000', '#3333cc', '#f00', '#008000', '#808080', '#00c0ff', '#0f0', '#f0f', '#ff8000', '#ff0', '#fff'];

const DOCK: { icon: React.ReactNode; running?: boolean; active?: boolean }[] = [
  { icon: <Firefox /> }, { icon: <Files />, running: true }, { icon: <Writer /> }, { icon: <Software /> }, { icon: <Thunderbird /> },
  { icon: <PromptBox>&gt;_</PromptBox> }, { icon: <Chrome /> }, { icon: <Recorder />, running: true },
  { icon: <Xournal />, running: true, active: true }, { icon: <VsCode /> },
];

const Caret = ({ up, c = '#2e3436', w = 9 }: { up?: boolean; c?: string; w?: number }) => (
  <svg width={w} height="5" viewBox="0 0 10 6"><path d={up ? 'M0 6h10L5 0z' : 'M0 0h10L5 6z'} fill={c} /></svg>
);

const SystemPanel = () => (
  <Panel>
    <PanelLeft>
      <Activities>Activities</Activities>
      <AppMenu>
        <svg width="14" height="14" viewBox="0 0 14 14"><rect width="14" height="14" rx="1" fill="#8e8e8e" /><path d="M4 3q3 3 6 8M10 2Q6 6 4 11" stroke="#111" strokeWidth="2" fill="none" /></svg>
        Xournal
        <Caret c="#ededed" />
      </AppMenu>
    </PanelLeft>
    <PanelClock>{'Nov 3  2:28 PM'}<Bullet /></PanelClock>
    <PanelRight>
      <Record />
      <svg width="16" height="14" viewBox="0 0 16 14"><path d="M0 4q8-7 16 0l-1.300 1.500Q8 0 1.300 5.500z" fill="#d8d8d8" /><path d="M2 6q6-5 12 0l-6 8z" fill="#e8e8e8" /></svg>
      <svg width="15" height="14" viewBox="0 0 15 14"><path d="M0 4.500h3L7 0v14l-4-4.500H0z" fill="#e0e0e0" /><path d="M9 4.500q2 2.500 0 5M11 2.500q4 4.500 0 9" fill="none" stroke="#e0e0e0" strokeWidth="1.200" /></svg>
      <svg width="16" height="17" viewBox="0 0 16 17"><rect x="5.500" y="0" width="5" height="11" rx="2.500" fill="#d0d0d0" /><path d="M3.500 7v2q0 4 4.500 4t4.500-4V7M8 13v3M5.500 16h5" fill="none" stroke="#d0d0d0" strokeWidth="1.200" /></svg>
      <svg width="16" height="16" viewBox="0 0 16 16"><path d="M6 0h4v2H6z" fill="#d0d0d0" /><rect x="3.500" y="1.600" width="9" height="13.500" rx="1" fill="none" stroke="#d0d0d0" strokeWidth="1.300" /><path d="M5 8.500h6v5H5z" fill="#d0d0d0" /></svg>
      <Caret c="#e0e0e0" w={10} />
    </PanelRight>
  </Panel>
);

const Launcher = () => (
  <Dock>
    {DOCK.map((d, i) => <DockItem key={i} $running={d.running} $active={d.active}>{d.icon}</DockItem>)}
    <AppGrid>{Array.from({ length: 9 }, (_, i) => <AppGridDot key={i} />)}</AppGrid>
  </Dock>
);

const XournalWindow = () => (
  <Window>
    <TitleBar>
      <i />
      <WindowTitle>Xournal</WindowTitle>
      <WindowButtons>
        <svg width="8" height="9" viewBox="0 0 8 9"><path d="M.5 3h5v5.500h-5zM3 .5h5" fill="none" stroke="#ccc" /></svg>
        <CloseButton><svg width="8" height="8" viewBox="0 0 8 8"><path d="M.5.5l7 7M7.500.5l-7 7" stroke="#e8e0dc" strokeWidth="1.500" /></svg></CloseButton>
      </WindowButtons>
    </TitleBar>
    <MenuBar>{MENUS.map(([t, w]) => <MenuItem key={t} $w={w}>{t}</MenuItem>)}</MenuBar>
    <Toolbar>{ACTIONS.map(([icon, sep], i) => <Tool key={i} $sep={sep}>{icon}</Tool>)}</Toolbar>
    <Toolbar>
      <Tool $w={36}><ToolFace $on $w={34}><PencilIcon /></ToolFace></Tool>
      {TOOLS.map((icon, i) => <Tool key={i} $w={36.05} $sep={i === 5 || i === 9 || i === 11}>{icon}</Tool>)}
      <Tool $w={24}><Thickness $d={5} /></Tool>
      <Tool $w={24}><ToolFace $on $w={22}><Thickness $d={8} /></ToolFace></Tool>
      <Tool $w={24}><Thickness $d={11} /></Tool>
      <Tool $w={1.4} />
      {COLORS.map((c, i) => <Tool key={c} $w={28}><ToolFace $on={i === 0} $w={26}><Swatch $c={c} /></ToolFace></Tool>)}
      <ColorButton />
      <FontButton><FontName>Sans</FontName><FontSize>12</FontSize></FontButton>
    </Toolbar>
    <Viewport>
      <Pages>
        <BlankSheet />
        <RuledSheet><Handwriting /></RuledSheet>
      </Pages>
      <ScrollTrack><ScrollThumb /></ScrollTrack>
    </Viewport>
    <StatusBar>
      <StatusText $w={40}>Page</StatusText>
      <Field $w={68} $pl={9}>37<Spinner><Caret up /><Caret /></Spinner></Field>
      <StatusText $w={57} $pl={4}>of 37</StatusText>
      <StatusText $w={51}>Layer:</StatusText>
      <Field $w={117} $pl={8}>Layer 1<ComboArrow><Caret w={10} /></ComboArrow></Field>
    </StatusBar>
  </Window>
);

const PlayerOverlay = () => (
  <Player>
    <PlayerTop>
      <QueueIcon width="28" height="28" viewBox="0 0 28 28">
        <path d="M.5 0h21v3.500H.5zM.5 7h21v3.500H.5zM.5 14h14v3.500H.5z" fill="#eee" />
        <path d="M17 14l9 5.500-9 5.500z" fill="#fff" />
      </QueueIcon>
      <VideoTitle>Software Design &amp; Analysis(Week-11-b)</VideoTitle>
      <svg width="87" height="40" viewBox="1813 17 87 40">
        <circle cx="1828" cy="36" r="15" fill="#e8e8e8" />
        <path d="M1827 27v10.500l8 4" fill="none" stroke="#1d1d1d" strokeWidth="2.800" />
        <path d="M1867.500 47.500q1.500-14 17.500-16.500v-7l12 12-12 11.500v-7q-11-.5-17.500 7z" fill="#e8e8e8" />
      </svg>
    </PlayerTop>
    <PlayerBottom>
      <Progress><Segment $w={305} $c="#f00" /><Segment $w={73} $c="rgba(255,255,255,.45)" /></Progress>
      <Controls>
        <ControlGroup>
          <svg width="191" height="26" viewBox="43 1040 191 26" fill="#eee">
            <path d="M44 1044h3v18h-3zM62 1044v18l-14-9zM102.500 1041h7v24h-7zM115.500 1041h7v24h-7zM159.500 1044v18l14-9zM175 1044h3v18h-3z" />
            <path d="M211 1049.500h4.500l6.500-6.500v20l-6.500-6.500H211z" />
            <path d="M223.500 1048q3.500 1.500 3.500 5t-3.500 5z" />
            <path d="M223.500 1044.500q7.500 1.500 7.500 8.500t-7.500 8.500" fill="none" stroke="#eee" strokeWidth="2.200" />
          </svg>
          <Time>7:07 / 43:43</Time>
        </ControlGroup>
        <CollapseIcon width="12" height="8" viewBox="0 0 12 8"><path d="M1 1l5 5 5-5" fill="none" stroke="#f2f2f2" strokeWidth="2" /></CollapseIcon>
        <ControlGroup $end>
          <CaptionBadge>
            <svg width="18" height="10" viewBox="0 0 18 10"><path d="M7 3V1H1.500v8H7V7M16.500 3V1H11v8h5.500V7" fill="none" stroke="#7a7a7a" strokeWidth="2" /></svg>
          </CaptionBadge>
          <Settings>
            <svg width="22" height="22" viewBox="0 0 22 22">
              <path d="M9 0h4l.6 3 2 .9L18.500 2l2.500 3-2 2.500.7 2L22 10v3l-2.500.5-1 2 1.500 2.500-2.800 2.500-2.500-1.500-2 .8L12.500 22h-4l-.6-2.600-2-.9L3.500 20 1 17l1.500-2.500-.8-2L0 12V9l2-.8.8-2L1.300 4 4 1.500l2.500 1.800L8.500 3z" fill="#eee" />
              <circle cx="11" cy="11" r="3.800" fill="#858585" />
            </svg>
            <HdBadge>HD</HdBadge>
          </Settings>
          <svg width="23" height="22" viewBox="0 0 22 22"><path d="M0 6.500h6.500V0M15.500 0v6.500H22M0 15.500h6.500V22M15.500 22v-6.500H22" fill="none" stroke="#eee" strokeWidth="3.200" /></svg>
        </ControlGroup>
      </Controls>
    </PlayerBottom>
  </Player>
);

export default function App() {
  return (
    <>
      <Global />
      <Screen>
        <SystemPanel />
        <Desktop>
          <Launcher />
          <XournalWindow />
        </Desktop>
        <Shade />
        <PlayerOverlay />
      </Screen>
    </>
  );
}
